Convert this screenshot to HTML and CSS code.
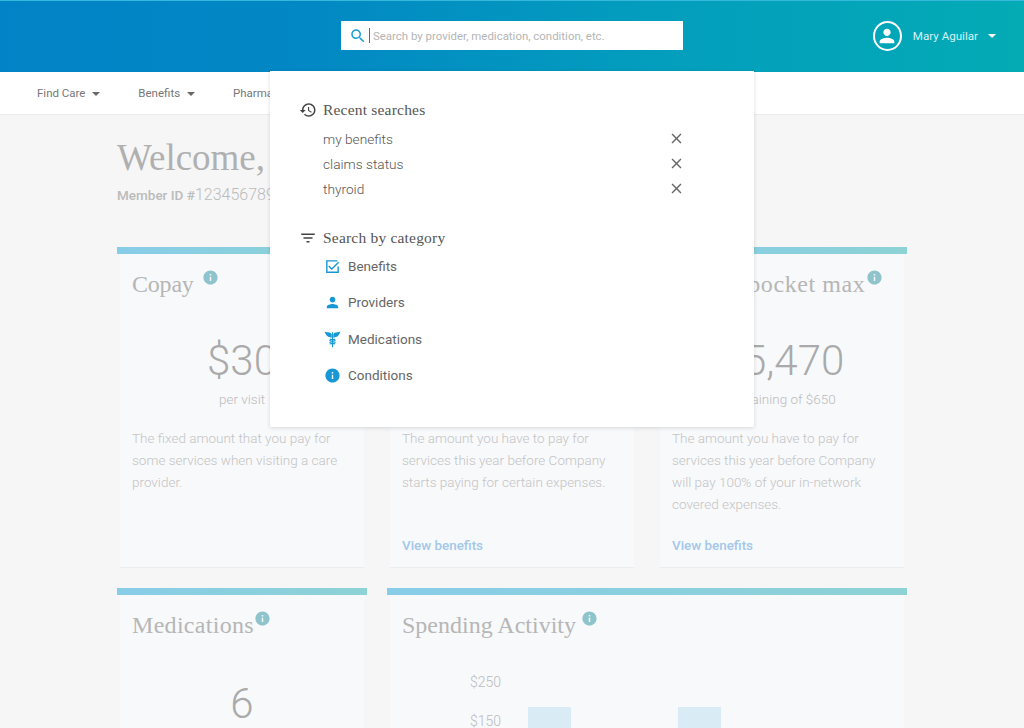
FILE: index.html
```html
<!DOCTYPE html>
<html lang="en">
<head>
<meta charset="utf-8">
<title>Member dashboard</title>
<link rel="stylesheet" href="styles.css">
</head>
<body>
<svg class="sprite" aria-hidden="true">
  <symbol id="i-search" viewBox="0 0 24 24"><path d="M15.5 14h-.79l-.28-.27C15.41 12.59 16 11.11 16 9.5 16 5.91 13.09 3 9.5 3S3 5.91 3 9.5 5.91 16 9.500 16c1.610 0 3.090-.59 4.230-1.570l.27.28v.79l5 4.990L20.490 19l-4.990-5zm-6 0C7.010 14 5 11.990 5 9.500S7.010 5 9.500 5 14 7.010 14 9.500 11.990 14 9.500 14z"/></symbol>
  <symbol id="i-history" viewBox="0 0 24 24"><path d="M13 3c-4.97 0-9 4.03-9 9H1l3.89 3.89.07.14L9 12H6c0-3.87 3.13-7 7-7s7 3.13 7 7-3.13 7-7 7c-1.93 0-3.68-.79-4.94-2.06l-1.42 1.42C8.27 19.99 10.51 21 13 21c4.97 0 9-4.03 9-9s-4.03-9-9-9zm-1 5v5l4.28 2.54.72-1.21-3.5-2.08V8H12z"/></symbol>
  <symbol id="i-filter" viewBox="0 0 24 24"><path d="M10 18h4v-2h-4v2zM3 6v2h18V6H3zm3 7h12v-2H6v2z"/></symbol>
  <symbol id="i-close" viewBox="0 0 24 24"><path d="M19 6.41L17.59 5 12 10.59 6.41 5 5 6.41 10.59 12 5 17.59 6.41 19 12 13.41 17.59 19 19 17.59 13.41 12z"/></symbol>
  <symbol id="i-person" viewBox="0 0 24 24"><path d="M12 12c2.21 0 4-1.79 4-4s-1.79-4-4-4-4 1.79-4 4 1.79 4 4 4zm0 2c-2.67 0-8 1.34-8 4v2h16v-2c0-2.66-5.33-4-8-4z"/></symbol>
  <symbol id="i-info" viewBox="0 0 24 24"><path d="M12 2C6.48 2 2 6.48 2 12s4.48 10 10 10 10-4.48 10-10S17.52 2 12 2zm1 15h-2v-6h2v6zm0-8h-2V7h2v2z"/></symbol>
  <symbol id="i-check" viewBox="0 0 24 24"><path d="M3 3h16v2H5v14h14v-7h2v9H3zM7.4 10.600L11 14.200 20 5.200l1.400 1.400L11 17l-5-5z"/></symbol>
  <symbol id="i-med" viewBox="0 0 24 24"><path d="M2 3.500l7.500 1.300 1.500 1.700v4.700L6.500 9.800 4 7.500zM22 3.500l-7.500 1.300-1.500 1.700v4.700l4.500-1.400L20 7.500z"/><path d="M11.300 4h1.400v19h-1.400z"/><path d="M8.500 12.500c2 .7 7 1 7 2.300s-7 .9-7 2.200 4.500 1.100 7 2.100M15.500 12.500c-2 .7-7 1-7 2.300s7 .9 7 2.200-4.500 1.100-7 2.100" fill="none" stroke="currentColor" stroke-width="1.300"/></symbol>
</svg>

<header class="topbar">
  <span></span>
  <div class="search">
    <svg class="search-icon"><use href="#i-search"/></svg>
    <span class="cursor"></span>
    <span class="placeholder">Search by provider, medication, condition, etc.</span>
  </div>
  <div class="profile">
    <span class="avatar"><svg><use href="#i-person"/></svg></span>
    <span class="profile-name">Mary Aguilar</span>
    <span class="caret caret-light"></span>
  </div>
</header>

<nav class="mainnav">
  <a class="nav-item">Find Care <span class="caret"></span></a>
  <a class="nav-item">Benefits <span class="caret"></span></a>
  <a class="nav-item">Pharmacy <span class="caret"></span></a>
</nav>

<main class="content">
  <h1 class="welcome">Welcome, Mary</h1>
  <p class="member"><strong>Member ID #</strong><span class="member-no">123456789</span></p>

  <section class="grid">
    <article class="card card-tall">
      <h2 class="card-title"><span class="title-copay">Copay</span><svg class="info gap-copay"><use href="#i-info"/></svg></h2>
      <div class="amount">$30</div>
      <div class="sub">per visit</div>
      <p class="desc">The fixed amount that you pay for some services when visiting a care provider.</p>
    </article>
    <article class="card card-tall">
      <h2 class="card-title">Deductible<svg class="info gap-copay"><use href="#i-info"/></svg></h2>
      <div class="amount">$1,200</div>
      <div class="sub">remaining of $1,500</div>
      <p class="desc">The amount you have to pay for services this year before Company starts paying for certain expenses.</p>
      <a class="link">View benefits</a>
    </article>
    <article class="card card-tall">
      <h2 class="card-title"><span class="title-oop">Out-of-pocket max</span><svg class="info gap-oop"><use href="#i-info"/></svg></h2>
      <div class="amount">$5,470</div>
      <div class="sub">remaining of $650</div>
      <p class="desc">The amount you have to pay for services this year before Company will pay 100% of your in-network covered expenses.</p>
      <a class="link">View benefits</a>
    </article>
    <article class="card">
      <h2 class="card-title"><span class="title-med">Medications</span><svg class="info"><use href="#i-info"/></svg></h2>
      <div class="amount amount-count">6</div>
    </article>
    <article class="card card-wide">
      <h2 class="card-title"><span>Spending Activity</span><svg class="info gap-spend"><use href="#i-info"/></svg></h2>
      <div class="chart">
        <div class="axis"><span>$250</span><span>$150</span></div>
        <div class="bars"><span class="bar"></span><span class="bar"></span></div>
      </div>
    </article>
  </section>
</main>

<aside class="dropdown">
  <h3 class="drop-head"><svg class="head-icon"><use href="#i-history"/></svg>Recent searches</h3>
  <ul class="recent">
    <li><span>my benefits</span><svg class="close"><use href="#i-close"/></svg></li>
    <li><span>claims status</span><svg class="close"><use href="#i-close"/></svg></li>
    <li><span>thyroid</span><svg class="close"><use href="#i-close"/></svg></li>
  </ul>
  <h3 class="drop-head drop-head-second"><svg class="head-icon"><use href="#i-filter"/></svg>Search by category</h3>
  <ul class="cats">
    <li><svg class="cat-icon"><use href="#i-check"/></svg>Benefits</li>
    <li><svg class="cat-icon"><use href="#i-person"/></svg>Providers</li>
    <li><svg class="cat-icon cat-icon-med"><use href="#i-med"/></svg>Medications</li>
    <li><svg class="cat-icon"><use href="#i-info"/></svg>Conditions</li>
  </ul>
</aside>
</body>
</html>
```

FILE: styles.css
```css
* { box-sizing: border-box; }

html, body {
  margin: 0;
  height: 728px;
  overflow: hidden;
}

body {
  background: #f6f6f7;
  font-family: Roboto, "Liberation Sans", sans-serif;
  color: #666;
  position: relative;
}

.sprite { display: none; }

svg { fill: currentColor; display: block; }

/* top bar */
.topbar {
  height: 72px;
  display: grid;
  grid-template-columns: 1fr 342px 1fr;
  align-items: center;
  background: linear-gradient(90deg, #0283c7 0%, #0288c4 30%, #039ebd 65%, #03abb5 100%);
  border-top: 1px solid #35b8dc;
}

.search {
  height: 29px;
  margin-top: -2px;
  background: #fff;
  display: flex;
  align-items: center;
  padding-left: 8px;
}

.search-icon {
  width: 18px;
  height: 18px;
  color: #1c9fd8;
}

.cursor {
  width: 1px;
  height: 15px;
  margin: 0 3px 0 2px;
  background: #666;
}

.placeholder {
  font-size: 11.45px;
  color: #b5b5b5;
}

.profile {
  justify-self: end;
  display: flex;
  align-items: center;
  margin-top: -2px;
  padding-right: 28px;
  color: #d5f3f7;
}

.avatar {
  width: 29px;
  height: 30px;
  border: 2px solid #fff;
  border-radius: 50%;
  display: flex;
  align-items: center;
  justify-content: center;
  color: #fff;
}

.avatar svg { width: 22px; height: 22px; }

.profile-name {
  font-size: 11.6px;
  margin: 0 10px 0 11px;
}

/* caret */
.caret {
  display: inline-block;
  width: 0;
  height: 0;
  margin-left: 4px;
  vertical-align: 1px;
  border-left: 4px solid transparent;
  border-right: 4px solid transparent;
  border-top: 4px solid #666;
}

.caret-light { border-top-color: #fff; margin-left: 0; }

/* nav */
.mainnav {
  height: 43px;
  display: flex;
  align-items: center;
  gap: 38px;
  padding-left: 37px;
  background: #fff;
  border-bottom: 1px solid #ebebeb;
}

.nav-item {
  font-size: 11.5px;
  color: #777;
  white-space: nowrap;
}

/* main */
.content {
  width: 790px;
  margin-left: 117px;
}

.welcome {
  margin: 23px 0 0;
  font: 400 37px/40px "Liberation Serif", serif;
  color: #b0b0b0;
}

.member {
  margin: 8px 0 0;
  font-size: 13.5px;
  line-height: 18px;
  color: #bbb;
}

.member strong { font-weight: 500; }

.member-no {
  font-size: 16px;
  font-weight: 300;
}

.grid {
  margin-top: 43px;
  display: grid;
  grid-template-columns: repeat(3, 250px);
  grid-auto-rows: auto;
  column-gap: 20px;
  row-gap: 20px;
}

.card {
  background:
    linear-gradient(90deg, #88cde8, #8dd2d5) top / 100% 7px no-repeat,
    linear-gradient(#eceded, #eceded) bottom / calc(100% - 6px) 1px no-repeat,
    linear-gradient(#f8f9fb, #f8f9fb) center / calc(100% - 6px) 100% no-repeat;
  padding: 7px 15px 0;
  display: flex;
  flex-direction: column;
}

.card-tall { height: 321px; }
.card-wide { grid-column: span 2; }

.card-title {
  margin: 14px 0 0;
  height: 36px;
  display: flex;
  font: 400 24px/32px "Liberation Serif", serif;
  color: #b6b6b6;
  white-space: nowrap;
}

.title-copay { letter-spacing: -.2px; }
.title-oop { letter-spacing: .6px; }
.title-med { letter-spacing: .3px; }

.info {
  flex: none;
  width: 17px;
  height: 17px;
  margin-top: 1px;
  color: #8fc4cd;
}

.gap-copay { margin-left: 8px; }
.gap-oop { margin-left: 1px; }
.gap-spend { margin-left: 5px; }

.amount {
  margin-top: 32px;
  text-align: center;
  font-size: 42px;
  line-height: 50px;
  font-weight: 300;
  color: #aaa;
}

.amount-count { margin-top: 34px; }

.sub {
  margin-top: 3px;
  text-align: center;
  font-size: 13.5px;
  line-height: 20px;
  font-weight: 300;
  color: #bbb;
}

.desc {
  margin: 18px 0 0;
  font-size: 13.5px;
  line-height: 22px;
  font-weight: 300;
  color: #c4c4c4;
}

.link {
  margin-top: auto;
  margin-bottom: 12px;
  font-size: 13.4px;
  line-height: 20px;
  font-weight: 500;
  color: #a3c8ea;
}

/* chart */
.chart {
  display: flex;
  margin: 27px 0 0 68px;
  height: 90px;
}

.axis {
  width: 58px;
  display: flex;
  flex-direction: column;
  gap: 19px;
  font-size: 14px;
  line-height: 20px;
  font-weight: 300;
  color: #bbb;
}

.bars {
  display: flex;
  gap: 107px;
  padding-top: 35px;
}

.bar {
  width: 43px;
  height: 70px;
  background: #d9ebf4;
}

/* search dropdown, lies over the page */
.dropdown {
  position: absolute;
  top: 71px;
  left: 270px;
  width: 484px;
  height: 356px;
  padding: 28px 69px 0 30px;
  background: #fff;
  box-shadow: 0 1px 4px rgba(0, 0, 0, .14);
}

.drop-head {
  margin: 0;
  display: flex;
  align-items: center;
  height: 22px;
  font: 400 15.5px/22px "Liberation Serif", serif;
  letter-spacing: .2px;
  color: #555;
}

.drop-head-second { margin-top: 26px; }

.head-icon {
  width: 18px;
  height: 18px;
  margin: 0 6px 0 -1px;
  color: #444;
}

.recent, .cats {
  list-style: none;
  margin: 0;
  padding: 0;
}

.recent { margin-top: 5px; padding-left: 23px; }

.recent li {
  height: 25px;
  display: flex;
  align-items: center;
  justify-content: space-between;
  font-size: 13.7px;
  font-weight: 300;
  color: #555;
}

.close {
  width: 17px;
  height: 17px;
  color: #666;
}

.cats { margin-top: -1px; padding-left: 23px; }

.cats li {
  height: 36.3px;
  display: flex;
  align-items: center;
  font-size: 13.5px;
  color: #666;
}

.cat-icon {
  width: 17px;
  height: 17px;
  margin-right: 7px;
  margin-left: 1px;
  color: #1798d4;
}

.cat-icon-med {
  width: 19px;
  height: 19px;
  margin-right: 6px;
  margin-left: 0;
}
```
